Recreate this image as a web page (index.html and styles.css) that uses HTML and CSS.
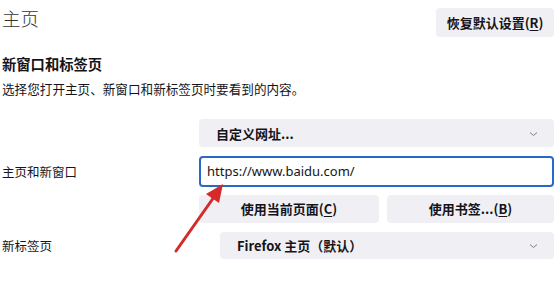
FILE: index.html
```html
<!DOCTYPE html>
<html lang="zh-CN">
<head>
<meta charset="utf-8">
<link rel="stylesheet" href="styles.css">
</head>
<body>
<div class="page">
  <div class="header">
    <h1 class="title">主页</h1>
    <button class="btn restore">恢复默认设置(<u>R</u>)</button>
  </div>
  <h2 class="heading">新窗口和标签页</h2>
  <p class="desc">选择您打开主页、新窗口和新标签页时要看到的内容。</p>
  <div class="grid">
    <div class="label"></div>
    <div class="select"><span>自定义网址...</span><svg class="chev" width="9" height="6" viewBox="0 0 9 6"><path d="M1 1.5 L4.5 4.5 L8 1.5" fill="none" stroke="#7a7a86" stroke-width="1"/></svg></div>
    <div class="label">主页和新窗口</div>
    <div class="input">https://www.baidu.com/</div>
    <div class="label"></div>
    <div class="btnrow">
      <button class="btn">使用当前页面(<u>C</u>)</button>
      <button class="btn">使用书签...(<u>B</u>)</button>
    </div>
    <div class="label">新标签页</div>
    <div class="select newtab"><span>Firefox 主页（默认）</span><svg class="chev" width="9" height="6" viewBox="0 0 9 6"><path d="M1 1.5 L4.5 4.5 L8 1.5" fill="none" stroke="#7a7a86" stroke-width="1"/></svg></div>
  </div>
  <svg class="arrow" width="560" height="302" viewBox="0 0 560 302">
    <line x1="176" y1="251" x2="214" y2="197" stroke="#d42a2a" stroke-width="3" stroke-linecap="round"/>
    <polygon points="223,184 206,194 219,203" fill="#d42a2a"/>
  </svg>
</div>
</body>
</html>
```
FILE: styles.css
```css
* { box-sizing: border-box; }
html, body { margin: 0; padding: 0; background: #ffffff; }
body {
  font-family: "Noto Sans CJK SC", "Noto Sans", sans-serif;
  color: #15141a;
  width: 560px;
  height: 302px;
  overflow: hidden;
}
.page {
  position: relative;
  padding: 0 6px 0 2px;
  width: 560px;
  height: 302px;
}
.header {
  display: flex;
  justify-content: space-between;
  align-items: flex-start;
  height: 46px;
}
.title {
  margin: 5px 0 0 0;
  font-size: 18.5px;
  line-height: 26px;
  font-weight: 300;
  color: #333333;
}
.btn {
  font-family: "Noto Sans CJK SC", "Noto Sans", sans-serif;
  font-size: 13px;
  font-weight: 700;
  color: #15141a;
  background: #f0f0f4;
  border: none;
  border-radius: 4px;
  height: 28px;
  padding: 0;
  line-height: 28px;
}
.btn u { text-underline-offset: 2px; }
.restore {
  margin-top: 8px;
  width: 118px;
  height: 29px;
}
.heading {
  margin: 8px 0 0 0;
  font-size: 14.3px;
  line-height: 20px;
  font-weight: 700;
}
.desc {
  margin: 5px 0 0 0;
  font-size: 12.6px;
  line-height: 20px;
  color: #15141a;
}
.grid {
  margin-top: 20px;
  display: grid;
  grid-template-columns: 197px 1fr;
  row-gap: 8px;
  align-items: center;
}
.label {
  font-size: 12.5px;
  line-height: 18px;
  padding-top: 2px;
}
.select {
  display: flex;
  align-items: center;
  justify-content: space-between;
  height: 28px;
  background: #f0f0f4;
  border-radius: 4px;
  padding: 0 16px 0 17px;
  font-size: 13px;
  font-weight: 700;
}
.chev { margin-top: 1px; }
.input {
  margin-top: 1px;
  height: 31px;
  border: 2px solid #2a68c8;
  border-radius: 4px;
  padding: 0 6px;
  font-family: "Noto Sans", sans-serif;
  font-size: 13px;
  line-height: 27px;
  color: #15141a;
}
.btnrow {
  display: grid;
  grid-template-columns: 180px 1fr;
  column-gap: 8px;
}
.newtab {
  margin-top: 1px;
  margin-left: 21px;
  height: 27px;
}
.arrow {
  position: absolute;
  left: 0;
  top: 0;
  pointer-events: none;
}
```
